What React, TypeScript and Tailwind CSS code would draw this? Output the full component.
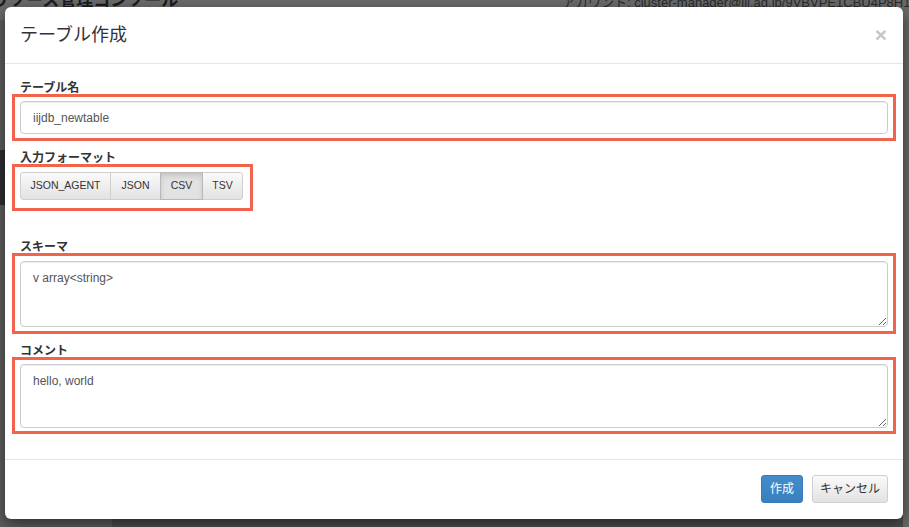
import React from "react";

const font = "font-['Liberation_Sans','Noto_Sans_CJK_JP',sans-serif]";

function Field({ label, children }: { label: string; children: React.ReactNode }) {
    return (
        <>
            <label className="block h-[17px] text-[12px] leading-[17px] font-bold text-[#333] translate-y-[1px]">{label}</label>
            {children}
        </>
    );
}

const formats = [
    { name: "JSON_AGENT", w: "w-[91px]", active: false },
    { name: "JSON", w: "w-[51px]", active: false },
    { name: "CSV", w: "w-[43px]", active: true },
    { name: "TSV", w: "w-[41px]", active: false },
];

export default function App() {
    return (
        <div className={`relative w-[909px] h-[527px] overflow-hidden bg-[#5b5b5b] ${font}`}>
            {/* page behind the backdrop */}
            <div className="flex flex-col h-full">
                <div className="relative h-[20px] bg-[#6b6b6b] shrink-0">
                    <span className="absolute left-[-8px] top-[-12px] text-[17px] font-bold text-[#1c1c1c] whitespace-nowrap">リソース管理コンソール</span>
                    <span className="absolute left-[562px] top-[-7px] text-[13px] text-[#2a2a2a] whitespace-nowrap">アカウント: cluster-manager@iij.ad.jp/9VBVPE1CBU4P8H1BT</span>
                </div>
                <div className="flex flex-1">
                    <div className="w-[112px] bg-[#5d5d5d] flex flex-col">
                        <div className="h-[130px]" />
                        <div className="h-[55px] w-[6px] bg-[#2c2e33]" />
                    </div>
                    <div className="flex-1 bg-[#4d4d4d]" />
                    <div className="w-[6px] bg-[#696969]" />
                </div>
            </div>

            {/* modal */}
            <div className="absolute inset-0 pt-[7px] pl-[5px]">
                <div className="w-[898px] h-[512px] bg-white rounded-[6px] shadow-[0_5px_15px_rgba(0,0,0,0.5)] flex flex-col">
                    <div className="h-[57px] shrink-0 border-b border-[#e5e5e5] flex items-center justify-between pl-[15px] pr-[16px]">
                        <h4 className="text-[18px] text-[#333] leading-[26px]">テーブル作成</h4>
                        <span className="text-[21px] font-bold text-[#c6c6c6] leading-none mt-[-2px]">×</span>
                    </div>

                    <div className="flex-1 px-[15px] pt-[15px]">
                        <Field label="テーブル名">
                            <div className="mt-[-2px] mx-[-8px] border-[3px] border-[#f2634b] pt-[4px] pb-[4px] px-[5px]">
                                <div className="h-[33px] flex items-center px-[12px] border border-[#ccc] rounded-[4px] shadow-[inset_0_1px_1px_rgba(0,0,0,0.075)] text-[12px] text-[#555]">
                                    iijdb_newtable
                                </div>
                            </div>
                        </Field>

                        <div className="mt-[8px]">
                            <Field label="入力フォーマット">
                                <div className="mt-[-2px] ml-[-8px] inline-flex border-[3px] border-[#f2634b] pt-[5px] pb-[8px] pl-[5px] pr-[7px]">
                                    <div className="flex h-[28px]">
                                        {formats.map((f, i) => (
                                            <div
                                                key={f.name}
                                                className={`${f.w} flex items-center justify-center text-[10.5px] text-[#333] border ${i > 0 ? "-ml-px" : ""} ${i === 0 ? "rounded-l-[3px]" : ""} ${i === formats.length - 1 ? "rounded-r-[3px]" : ""} ${f.active ? "relative bg-[#e2e2e2] border-[#b9b9b9] shadow-[inset_0_3px_5px_rgba(0,0,0,0.125)]" : "bg-gradient-to-b from-[#fafafa] to-[#e2e2e2] border-[#cfcfcf]"}`}
                                            >
                                                {f.name}
                                            </div>
                                        ))}
                                    </div>
                                </div>
                            </Field>
                        </div>

                        <div className="mt-[27px]">
                            <Field label="スキーマ">
                                <div className="mt-[-2px] mx-[-8px] border-[3px] border-[#f2634b] pt-[5px] pb-[4px] px-[5px]">
                                    <textarea
                                        readOnly
                                        defaultValue="v array<string>"
                                        className="block w-full h-[66px] px-[12px] py-[6px] leading-[20px] border border-[#ccc] rounded-[4px] shadow-[inset_0_1px_1px_rgba(0,0,0,0.075)] text-[12px] text-[#555] outline-none"
                                    />
                                </div>
                            </Field>
                        </div>

                        <div className="mt-[8px]">
                            <Field label="コメント">
                                <div className="mt-[-2px] mx-[-8px] border-[3px] border-[#f2634b] pt-[4px] pb-[3px] px-[5px]">
                                    <textarea
                                        readOnly
                                        defaultValue="hello, world"
                                        className="block w-full h-[64px] px-[12px] py-[6px] leading-[20px] border border-[#ccc] rounded-[4px] shadow-[inset_0_1px_1px_rgba(0,0,0,0.075)] text-[12px] text-[#555] outline-none"
                                    />
                                </div>
                            </Field>
                        </div>
                    </div>

                    <div className="h-[60px] shrink-0 border-t border-[#e5e5e5] flex items-start justify-end gap-[9px] pt-[15px] pr-[15px]">
                        <button className="w-[42px] h-[28px] rounded-[3px] text-[12px] text-white bg-gradient-to-b from-[#438dcd] to-[#3a7fbf] border border-[#3879b6]">
                            作成
                        </button>
                        <button className="w-[76px] h-[28px] rounded-[3px] text-[12px] text-[#333] bg-gradient-to-b from-[#fafafa] to-[#e2e2e2] border border-[#cfcfcf]">
                            キャンセル
                        </button>
                    </div>
                </div>
            </div>
        </div>
    );
}
